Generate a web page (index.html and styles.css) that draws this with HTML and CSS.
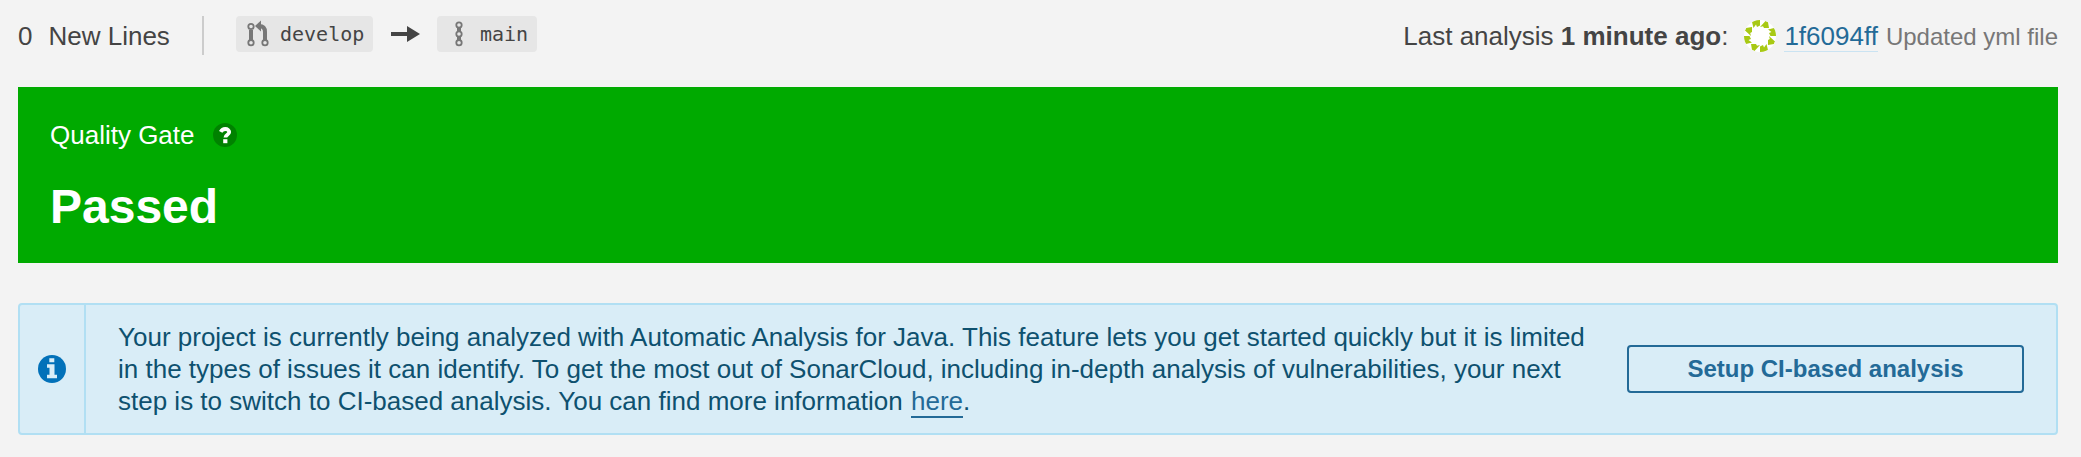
FILE: index.html
```
<!DOCTYPE html>
<html lang="en">
<head>
<meta charset="utf-8">
<title>Quality Gate</title>
<link rel="stylesheet" href="styles.css">
</head>
<body>
<main class="page">
  <header class="topbar">
    <div class="lines"><span>0</span><span class="lines-label">New Lines</span></div>
    <div class="branches">
      <span class="badge badge-source">
        <svg class="branch-icon" width="32" height="32" viewBox="0 0 32 32" fill="none" stroke="#777">
          <path stroke-width="4" d="M9 12v11M23 23v-9c0-4-2-6-6-6h-1"/>
          <path fill="#777" stroke="none" d="M13 8l6-5.500v11z"/>
          <circle cx="9" cy="8.500" r="2.700" stroke-width="1.800" fill="#e6e6e6"/>
          <circle cx="9" cy="24.700" r="2.700" stroke-width="1.800" fill="#e6e6e6"/>
          <circle cx="23" cy="24.700" r="2.700" stroke-width="1.800" fill="#e6e6e6"/>
        </svg>
        <span>develop</span>
      </span>
      <svg class="arrow" width="29" height="16" viewBox="0 0 29 16" fill="#444"><path d="M0 6h16V0l13 8-13 8v-6H0z"/></svg>
      <span class="badge badge-target">
        <svg class="branch-icon" width="32" height="32" viewBox="0 0 32 32" fill="none" stroke="#777">
          <path stroke-width="4" d="M16 7v18"/>
          <circle cx="16" cy="7" r="2.700" stroke-width="1.800" fill="#e6e6e6"/>
          <circle cx="16" cy="16" r="2.700" stroke-width="1.800" fill="#e6e6e6"/>
          <circle cx="16" cy="24.700" r="2.700" stroke-width="1.800" fill="#e6e6e6"/>
        </svg>
        <span>main</span>
      </span>
    </div>
    <div class="analysis">
      <span>Last analysis <strong>1 minute ago</strong>:</span>
      <svg class="avatar" width="32" height="32" viewBox="0 0 32 32">
        <defs>
          <clipPath id="round"><circle cx="16" cy="16" r="16"/></clipPath>
          <g id="side">
            <path d="M8 0v2l1.500 6L12 4.500 13 7l3-1.500V0zM16 7l5.500-6L24 2l1 6h-5l-1-1.800z"/>
          </g>
        </defs>
        <g clip-path="url(#round)">
          <path fill="#fff" d="M0 0h32v32H0z"/>
          <g fill="#a8c914">
            <use href="#side"/>
            <use href="#side" transform="rotate(90 16 16)"/>
            <use href="#side" transform="rotate(180 16 16)"/>
            <use href="#side" transform="rotate(270 16 16)"/>
          </g>
        </g>
      </svg>
      <a class="commit">1f6094ff</a>
      <span class="message">Updated yml file</span>
    </div>
  </header>

  <section class="gate">
    <div class="gate-title">
      <span>Quality Gate</span>
      <svg width="24" height="24" viewBox="0 0 24 24">
        <circle cx="12" cy="12" r="12" fill="#008200"/>
        <path d="M7.700 8.800C8.800 6.800 10.300 6 12.200 6c2.400 0 4 1.300 4 3.100 0 2.700-3.800 2.600-3.800 5.400" fill="none" stroke="#fff" stroke-width="3.800"/>
        <path d="M10.200 16.200h4.200v4h-4.200z" fill="#fff"/>
      </svg>
    </div>
    <div class="gate-status">Passed</div>
  </section>

  <section class="notice">
    <div class="notice-icon">
      <svg width="28" height="28" viewBox="0 0 28 28">
        <circle cx="14" cy="14" r="14" fill="#0271b9"/>
        <path fill="#d9edf7" d="M11.300 3.200h5v4h-5zM9 9.300h7.500v10.500H19v3.500H9v-3.500h2.500v-7H9z"/>
      </svg>
    </div>
    <div class="notice-body">
      <p class="notice-text">Your project is currently being analyzed with Automatic Analysis for Java. This feature lets you get started quickly but it is limited<br>in the types of issues it can identify. To get the most out of SonarCloud, including in-depth analysis of vulnerabilities, your next<br>step is to switch to CI-based analysis. You can find more information <a class="here">here</a>.</p>
      <button class="setup">Setup CI-based analysis</button>
    </div>
  </section>
</main>
</body>
</html>
```
FILE: styles.css
```
* { box-sizing: border-box; }
body {
  margin: 0;
  background: #f3f3f3;
  color: #444;
  font: 26px/32px "Liberation Sans", Arial, sans-serif;
}
svg { display: block; flex: none; }
.page { padding: 16px 23px 0 18px; }
.topbar { display: flex; height: 71px; align-items: flex-start; white-space: nowrap; }
.lines {
  display: flex;
  gap: 16px;
  width: 186px;
  height: 39px;
  padding-top: 4px;
  border-right: 2px solid #ccc;
}
.branches { display: flex; align-items: center; margin-left: 32px; }
.badge {
  display: flex;
  align-items: center;
  height: 36px;
  border-radius: 4px;
  background: #e6e6e6;
  font: 20px/32px "DejaVu Sans Mono", monospace;
}
.badge-source { width: 137px; padding-left: 6px; gap: 6px; }
.badge-target { width: 100px; padding-left: 6px; gap: 5px; }
.arrow { margin: 0 17px 0 18px; }
.analysis { display: flex; margin-left: auto; padding-top: 4px; }
.avatar { margin-left: 16px; }
.commit { margin-left: 8px; height: 32px; border-bottom: 1px solid #cae3f2; color: #236a97; }
.message { margin-left: 8px; color: #777; font-size: 24px; line-height: 34px; }
.gate { height: 176px; padding: 32px; background: #0a0; color: #fff; }
.gate-title { display: flex; align-items: center; gap: 18px; }
.gate-status { margin-top: 28px; font-size: 48px; line-height: 56px; font-weight: 700; }
.notice {
  display: flex;
  height: 132px;
  margin-top: 40px;
  border: 2px solid #b1dff3;
  border-radius: 4px;
  background: #d9edf7;
  color: #0e516f;
}
.notice-icon {
  display: flex;
  align-items: center;
  justify-content: center;
  width: 66px;
  border-right: 2px solid #b1dff3;
}
.notice-body { display: flex; flex: 1; align-items: center; justify-content: space-between; padding: 0 32px; }
.notice-text { margin: 0; height: 96px; white-space: nowrap; }
.here { display: inline-block; height: 33px; margin-left: 1px; border-bottom: 2px solid #236a97; color: #236a97; }
.setup {
  width: 397px;
  height: 48px;
  border: 2px solid #236a97;
  border-radius: 4px;
  padding: 0;
  background: transparent;
  color: #236a97;
  font: bold 24px/44px "Liberation Sans", Arial, sans-serif;
}
```
